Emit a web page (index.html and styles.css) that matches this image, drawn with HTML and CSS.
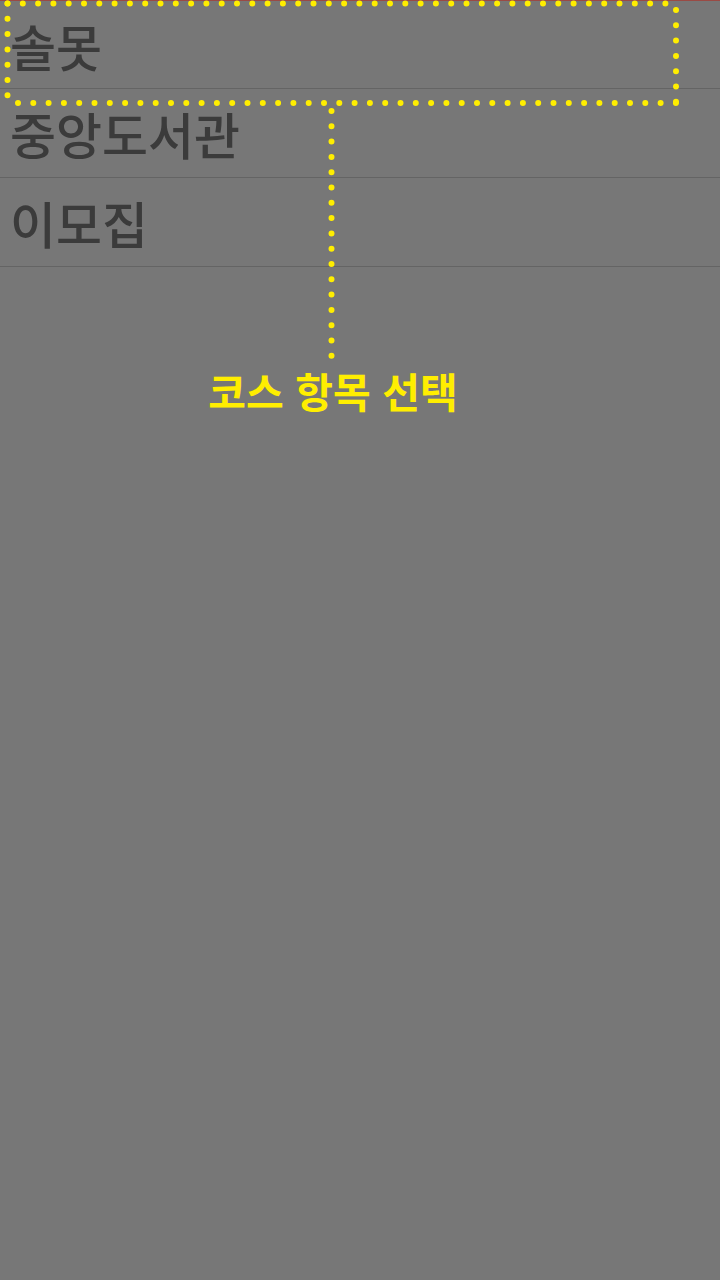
FILE: index.html
```html
<!DOCTYPE html>
<html lang="ko">
<head>
<meta charset="utf-8">
<link rel="stylesheet" href="styles.css">
</head>
<body>
<div class="screen">
  <ul class="course-list">
    <li class="course-item">솔못</li>
    <li class="course-item">중앙도서관</li>
    <li class="course-item">이모집</li>
  </ul>
  <svg class="annot" width="720" height="400" viewBox="0 0 720 400">
    <g stroke="#ffee00" stroke-width="6" stroke-linecap="round" fill="none" stroke-dasharray="0 15.3">
      <line x1="7.5" y1="3.5" x2="676" y2="3.5"/>
      <line x1="7.5" y1="3.5" x2="7.5" y2="103"/>
      <line x1="18" y1="103" x2="676" y2="103"/>
      <line x1="676" y1="10" x2="676" y2="103"/>
      <line x1="331.5" y1="111" x2="331.5" y2="357"/>
    </g>
  </svg>
  <div class="annot-label">코스 항목 선택</div>
</div>
</body>
</html>
```
FILE: styles.css
```css
html, body {
  margin: 0;
  padding: 0;
  background: #777777;
}
.screen {
  position: relative;
  width: 720px;
  height: 1280px;
  background: #777777;
  border-top: 1px solid #9a4a44;
  box-sizing: border-box;
  font-family: "Noto Sans CJK KR", "Noto Sans", sans-serif;
}
.course-list {
  list-style: none;
  margin: 0;
  padding: 0;
}
.course-item {
  height: 87px;
  display: flex;
  align-items: center;
  padding-left: 10px;
  font-size: 50px;
  font-weight: 500;
  color: #3b3b3b;
  border-bottom: 1px solid #646464;
}
.course-item + .course-item {
  height: 88px;
}
.annot {
  position: absolute;
  left: 0;
  top: -1px;
}
.annot-label {
  position: absolute;
  left: 0;
  width: 666px;
  top: 365px;
  text-align: center;
  font-size: 41px;
  font-weight: 700;
  color: #ffee00;
  line-height: 1.2;
}
```
